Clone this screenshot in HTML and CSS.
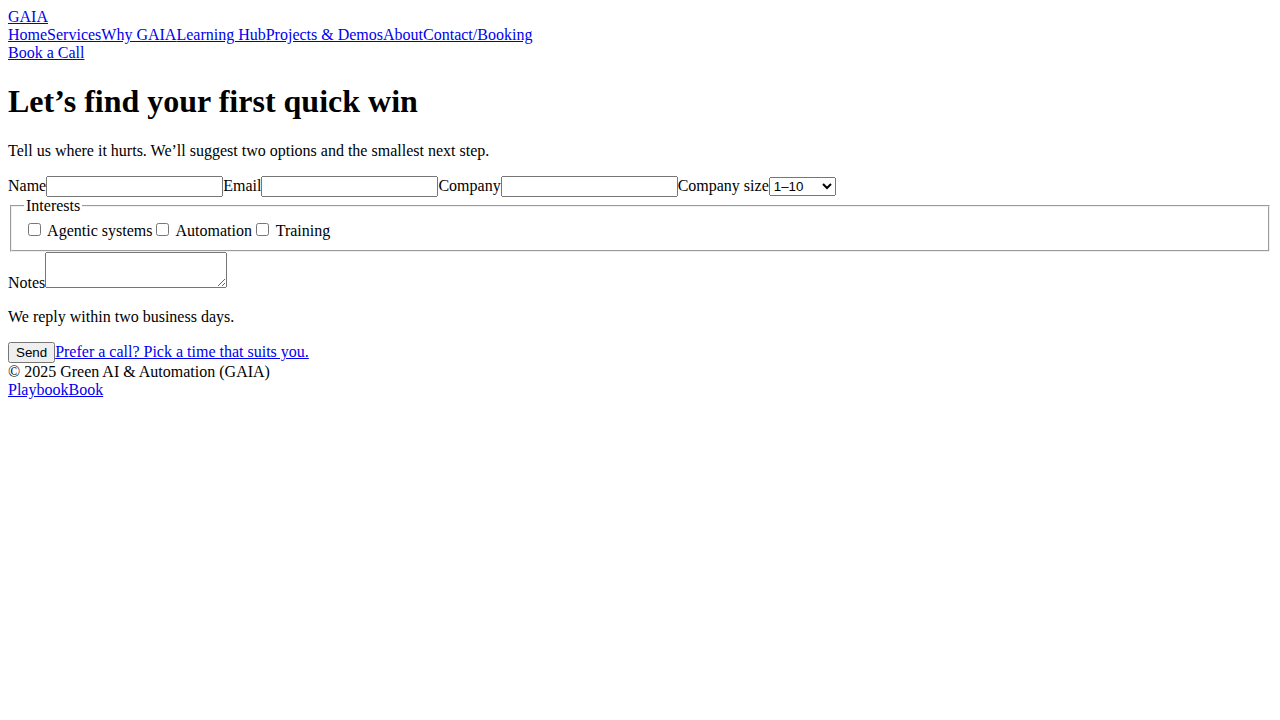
FILE: index.html
```html
<!DOCTYPE html>
<html lang="en">
<head>
<meta charset="utf-8">
<title>Contact/Booking — GAIA</title>
<link rel="stylesheet" href="styles.css">
</head>
<body class="page">
<header class="site-header">
<div class="brand"><a href="#">GAIA</a></div>
<nav class="main-nav"><a href="#">Home</a><a href="#">Services</a><a href="#">Why GAIA</a><a href="#">Learning Hub</a><a href="#">Projects &amp; Demos</a><a href="#">About</a><a href="#">Contact/Booking</a></nav>
<div class="header-cta"><a href="#">Book a Call</a></div>
</header>
<main class="content">
<h1 class="title">Let’s find your first quick win</h1>
<p class="lead">Tell us where it hurts. We’ll suggest two options and the smallest next step.</p>
<form class="contact-form"><label>Name<input class="field" type="text" name="name"></label><label>Email<input class="field" type="email" name="email"></label><label>Company<input class="field" type="text" name="company"></label><label>Company size<select class="size-select" name="size"><option>1–10</option><option>11–50</option><option>51–200</option><option>200+</option></select></label><fieldset class="interests"><legend>Interests</legend><label><input type="checkbox"> Agentic systems</label><label><input type="checkbox"> Automation</label><label><input type="checkbox"> Training</label></fieldset><label>Notes<textarea name="notes"></textarea></label><p class="note">We reply within two business days.</p><div class="actions"><button type="submit">Send</button><a href="#">Prefer a call? Pick a time that suits you.</a></div></form>
</main>
<footer class="site-footer">
<div class="copyright">© 2025 Green AI &amp; Automation (GAIA)</div>
<nav class="footer-nav"><a href="#">Playbook</a><a href="#">Book</a></nav>
</footer>
</body>
</html>
```
FILE: styles.css
```css
.page {
  font-family: "Liberation Serif", "Times New Roman", serif;
}

.field {
  box-sizing: border-box;
  width: 177px;
}
```
